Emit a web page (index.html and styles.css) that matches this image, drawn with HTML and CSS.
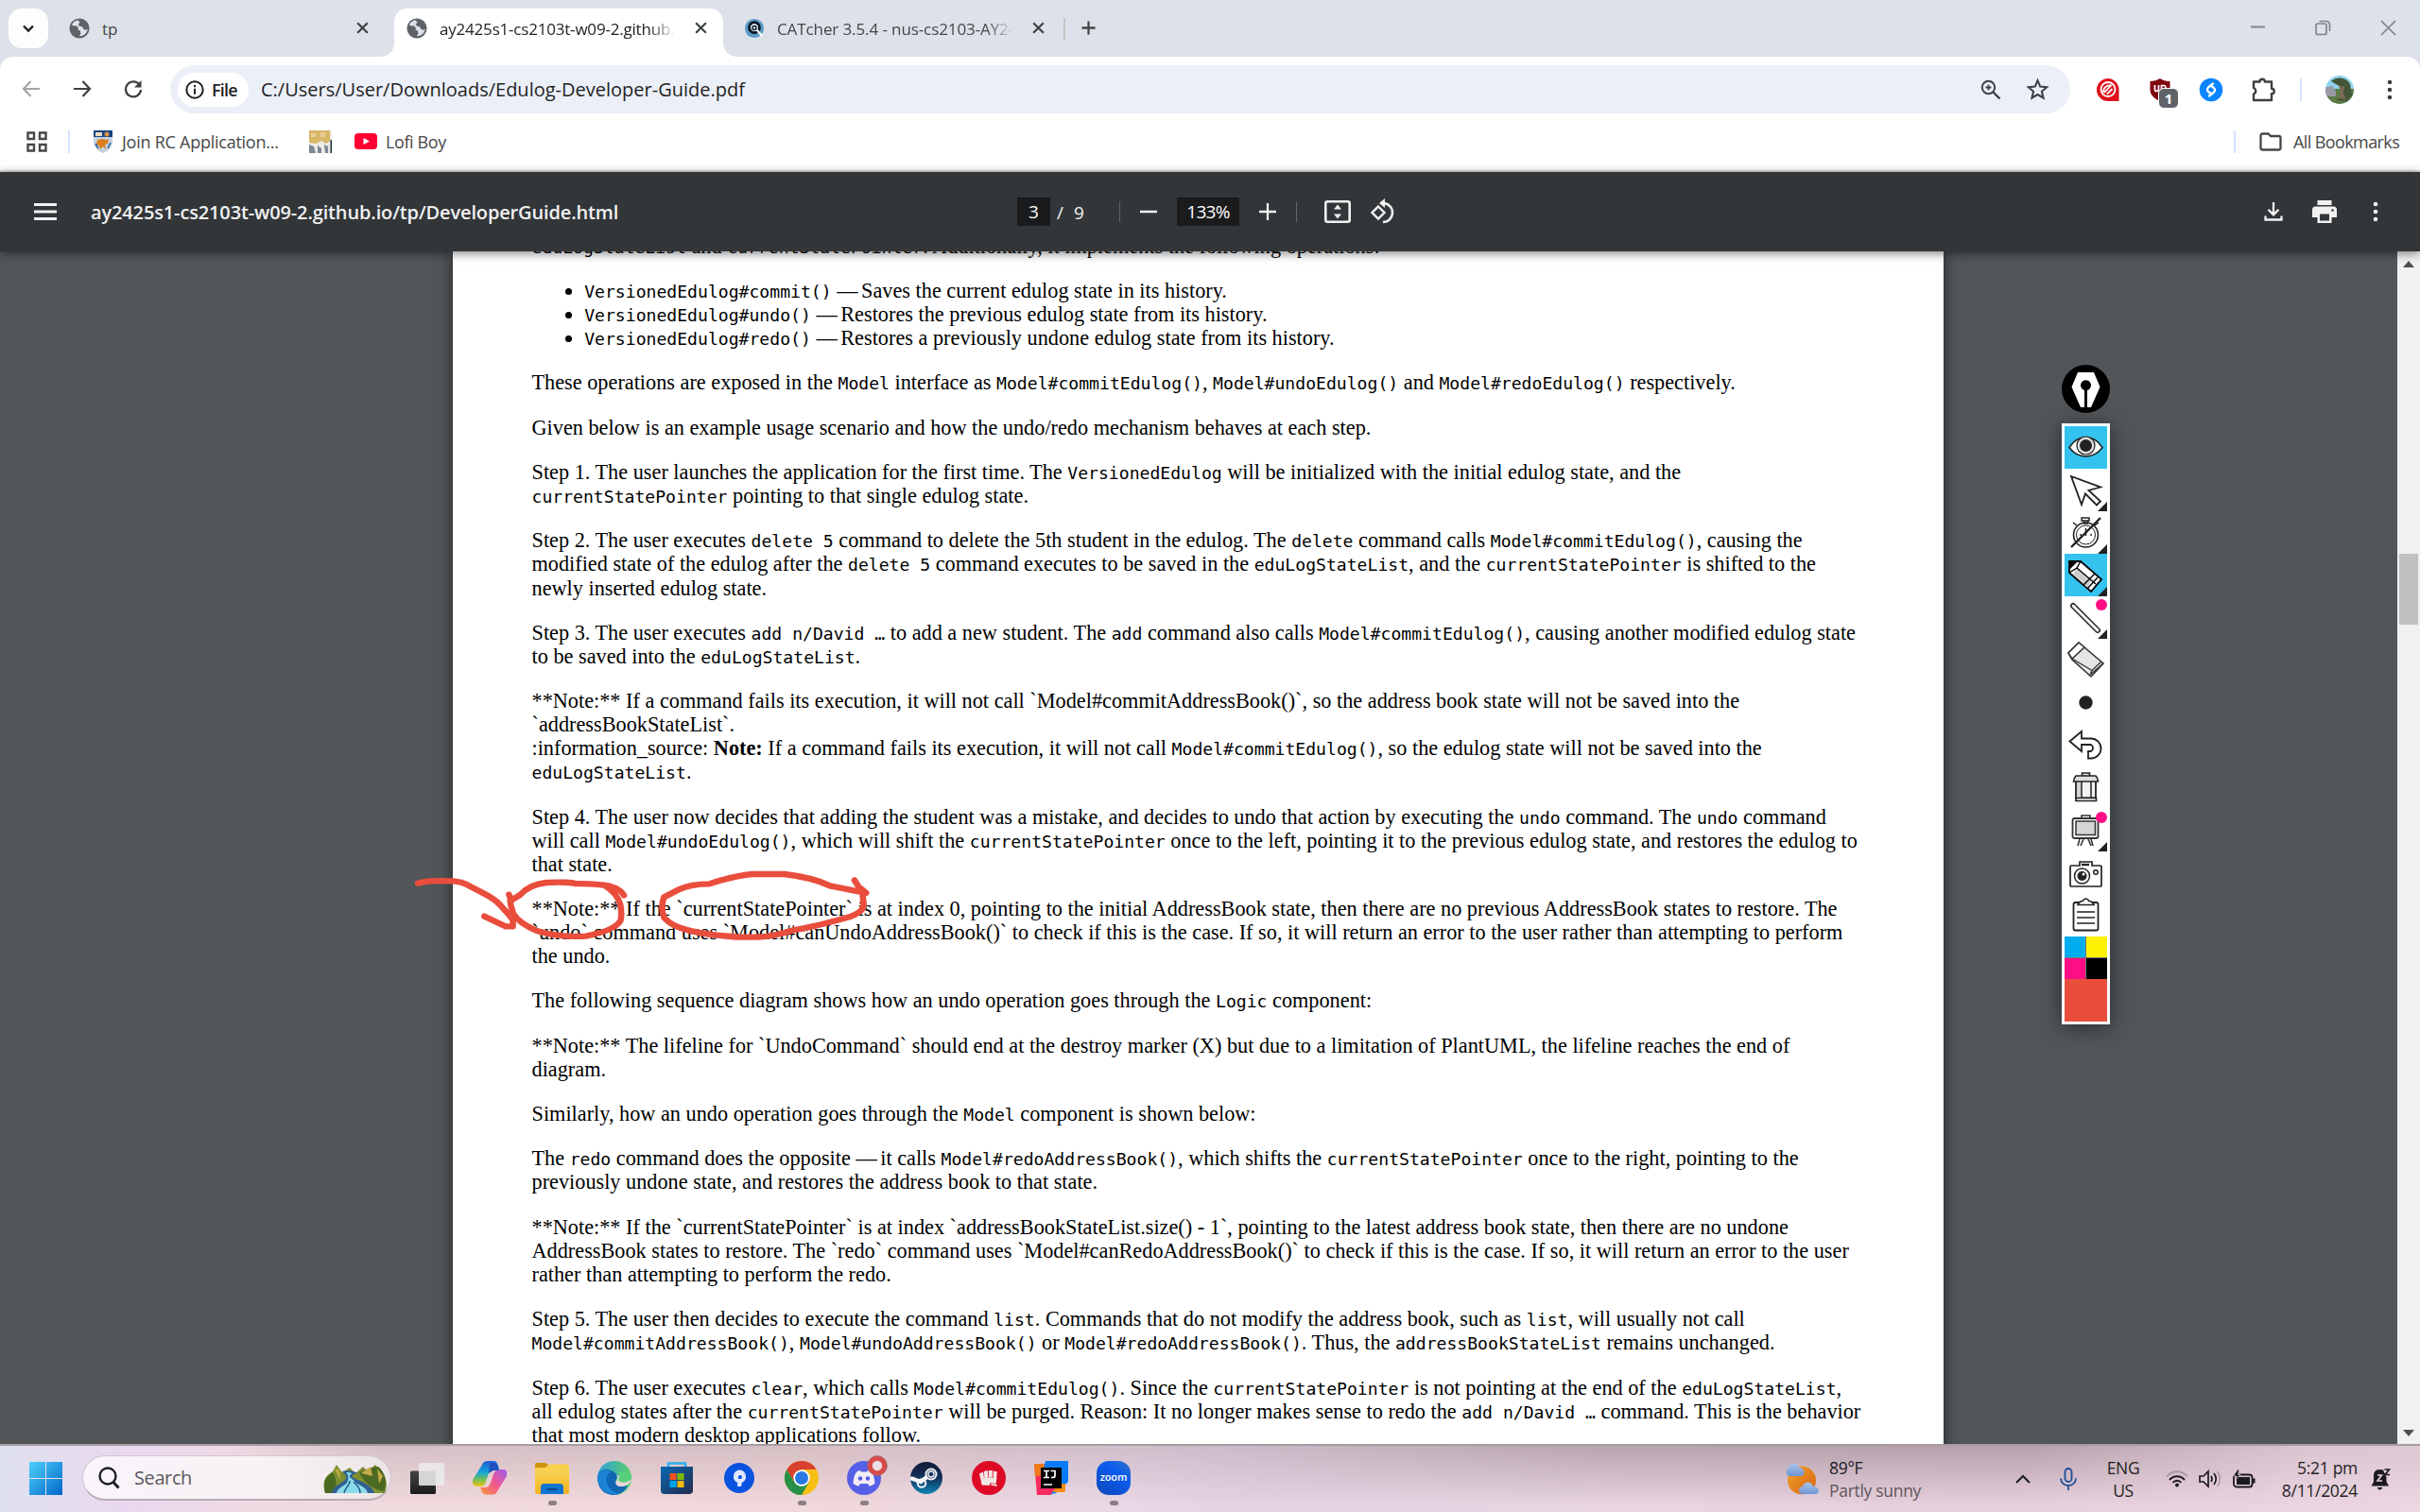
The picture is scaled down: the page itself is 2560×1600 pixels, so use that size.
FILE: index.html
```html
<!DOCTYPE html>
<html lang="en">
<head>
<meta charset="utf-8">
<title>ay2425s1-cs2103t-w09-2.github.io/tp/DeveloperGuide.html</title>
<link rel="stylesheet" href="styles.css">
</head>
<body>
<svg class="defs" width="0" height="0">
  <defs>
    <symbol id="globe" viewBox="0 0 24 24"><circle cx="12" cy="12" r="11.5" fill="#5f6368"/><path d="M10 2.500c-3 .6-5.600 2.600-6.800 5.400l1.600 1 4.200.4 1.700 2.200-.2 2.300 2.400.9.700 3-1.600 3.200c5 .4 9.200-3.400 9.400-8.300l-2.200 1.600-2.700-1.700-1.300-2.500-3-.4-1.600-2 1.900-2.600z" fill="#dde1e9"/></symbol>
    <symbol id="x" viewBox="0 0 14 14"><path d="M2 2l10 10M12 2L2 12" stroke="currentColor" stroke-width="2" fill="none"/></symbol>
    <symbol id="dots" viewBox="0 0 24 24"><circle cx="12" cy="4" r="2.300" fill="currentColor"/><circle cx="12" cy="12" r="2.300" fill="currentColor"/><circle cx="12" cy="20" r="2.300" fill="currentColor"/></symbol>
    <linearGradient id="gWin" x1="0" y1="0" x2="1" y2="1"><stop offset="0" stop-color="#4fd0fc"/><stop offset="1" stop-color="#0067c8"/></linearGradient>
    <linearGradient id="gFold" x1="0" y1="0" x2="0" y2="1"><stop offset="0" stop-color="#fad75c"/><stop offset="1" stop-color="#f3b21f"/></linearGradient>
    <linearGradient id="gEdge" x1="0" y1="0" x2="1" y2="0"><stop offset="0" stop-color="#2a9fdc"/><stop offset="1" stop-color="#5fd06a"/></linearGradient>
    <linearGradient id="gStore" x1="0" y1="0" x2="1" y2="1"><stop offset="0" stop-color="#0a68b4"/><stop offset="1" stop-color="#232a4c"/></linearGradient>
    <linearGradient id="gSteam" x1="0" y1="0" x2="0" y2="1"><stop offset="0" stop-color="#101a35"/><stop offset=".5" stop-color="#12335e"/><stop offset="1" stop-color="#0d86b4"/></linearGradient>
    <linearGradient id="gCop1" x1="0" y1="0" x2="0" y2="1"><stop offset="0" stop-color="#1d5fd8"/><stop offset=".45" stop-color="#18a5d8"/><stop offset=".75" stop-color="#7cc04a"/><stop offset="1" stop-color="#f4c020"/></linearGradient>
    <linearGradient id="gCop2" x1="1" y1="0" x2="0" y2="1"><stop offset="0" stop-color="#a05af0"/><stop offset=".5" stop-color="#f0588e"/><stop offset="1" stop-color="#f8943c"/></linearGradient>
    <linearGradient id="gSun" x1="0" y1="0" x2="1" y2="1"><stop offset="0" stop-color="#f0a82c"/><stop offset="1" stop-color="#d85c10"/></linearGradient>
    <linearGradient id="gCloud" x1="0" y1="0" x2="0" y2="1"><stop offset="0" stop-color="#a9c4ea"/><stop offset="1" stop-color="#6d96d4"/></linearGradient>
  </defs>
</svg>

<header class="tabstrip">
  <div class="tablist"><svg width="14" height="14" viewBox="0 0 14 14"><path d="M2 4.500l5 5 5-5" fill="none" stroke="#1f1f1f" stroke-width="2.400"/></svg></div>
  <div class="tab tab-a"><svg class="fav"><use href="#globe"/></svg><span class="label">tp</span><svg class="close"><use href="#x"/></svg></div>
  <div class="tab tab-b active"><svg class="fav"><use href="#globe"/></svg><span class="label">ay2425s1-cs2103t-w09-2.github.io</span><svg class="close"><use href="#x"/></svg></div>
  <div class="tab tab-c"><svg class="fav" viewBox="0 0 24 24"><circle cx="12" cy="12" r="11" fill="#5b9bc4"/><circle cx="12" cy="11" r="6" fill="#dceaf4" stroke="#0b1524" stroke-width="3"/><circle cx="12" cy="11.500" r="2.200" fill="none" stroke="#0b1524" stroke-width="1.500"/><path d="M15 14l6 7" stroke="#fff" stroke-width="2.500"/></svg><span class="label">CATcher 3.5.4 - nus-cs2103-AY2425S1</span><svg class="close"><use href="#x"/></svg></div>
  <i class="tabsep"></i>
  <svg class="plus" viewBox="0 0 18 18"><path d="M9 1.500v15M1.500 9h15" stroke="#444746" stroke-width="2.400"/></svg>
  <div class="winbtns">
    <svg width="16" height="16" viewBox="0 0 16 16"><path d="M0 7.500h15" stroke="#808387" stroke-width="2"/></svg>
    <svg width="17" height="17" viewBox="0 0 17 17" fill="none" stroke="#808387" stroke-width="1.700"><rect x="1" y="4" width="11" height="11.500" rx="2"/><path d="M4.500 1.500h7.500a3.500 3.500 0 0 1 3.500 3.500v7"/></svg>
    <svg width="17" height="17" viewBox="0 0 17 17"><path d="M1 1l15 15M16 1L1 16" stroke="#808387" stroke-width="1.700"/></svg>
  </div>
</header>

<section class="toolbar">
  <div class="navrow">
    <svg class="nav back" viewBox="0 0 20 20"><path d="M19 10H2M9.500 2L2 10l7.500 8" fill="none" stroke="#a3a5a8" stroke-width="2.200"/></svg>
    <svg class="nav" viewBox="0 0 20 20"><path d="M1 10h17M10.500 2L18 10l-7.500 8" fill="none" stroke="#3c4043" stroke-width="2.200"/></svg>
    <svg class="nav" viewBox="0 0 20 20"><path d="M17 6.500A8 8 0 1 0 18 11" fill="none" stroke="#3c4043" stroke-width="2.300"/><path d="M18.500 1v7.500h-7.500z" fill="#3c4043"/></svg>
    <div class="omnibox">
      <div class="chip"><svg width="20" height="20" viewBox="0 0 20 20"><circle cx="10" cy="10" r="8.700" fill="none" stroke="#1f1f1f" stroke-width="2"/><path d="M10 8.700v6M10 5v2.200" stroke="#1f1f1f" stroke-width="2"/></svg><span>File</span></div>
      <span class="url">C:/Users/User/Downloads/Edulog-Developer-Guide.pdf</span>
      <svg class="mag" viewBox="0 0 22 22" fill="none" stroke="#3c4043"><circle cx="8.500" cy="8.500" r="6.700" stroke-width="2"/><path d="M13.500 13.500l7 7" stroke-width="2.400"/><path d="M8.500 5.500v6M5.500 8.500h6" stroke-width="1.800"/></svg>
      <svg class="star" viewBox="0 0 24 24"><path d="M12 3l2.600 6.200 6.700.6-5.100 4.400 1.600 6.600-5.800-3.500-5.800 3.500 1.600-6.600-5.100-4.400 6.700-.6z" fill="none" stroke="#3c4043" stroke-width="2"/></svg>
    </div>
    <div class="exts">
      <svg width="26" height="26" viewBox="0 0 26 26"><path d="M13 1a12 12 0 1 0 0 24h11.500V13A12 12 0 0 0 13 1z" fill="#e0101c"/><circle cx="13" cy="12.500" r="7.500" fill="none" stroke="#fff" stroke-width="1.800"/><path d="M8.500 16c-1.500-4 3-8.500 7.500-7.500l-7 7.500M12 17.500l5.500-5.500" fill="none" stroke="#fff" stroke-width="1.800"/></svg>
      <div class="ublock"><svg width="24" height="26" viewBox="0 0 24 26"><path d="M12 1c3 2.200 7 2.800 10.500 3v9c0 6-5 9.500-10.500 12C6.500 22.500 1.500 19 1.500 13V4C5 3.800 9 3.200 12 1z" fill="#800610"/><path d="M6.500 8v4.500a2 2 0 0 0 4 0V8M13.500 17V8.500h2a2.500 2.500 0 0 1 0 5h-2" fill="none" stroke="#fff" stroke-width="1.700"/></svg><b>1</b></div>
      <svg width="26" height="26" viewBox="0 0 26 26"><circle cx="13" cy="13" r="12.300" fill="#0a84ff"/><path d="M15 6.500l-5 4a3 3 0 0 0 0 4.500l2.500 1.700M11 19.500l5-4a3 3 0 0 0 0-4.500l-2.500-1.700" fill="none" stroke="#fff" stroke-width="2.300" stroke-linecap="round"/></svg>
      <svg width="28" height="28" viewBox="0 0 28 28"><path d="M4 5.500h6.500a2.700 2.700 0 0 1 5.400 0H23v7.200a2.700 2.700 0 0 1 0 5.400V25H4v-6.500a3.500 3.500 0 0 0 0-6.500z" fill="none" stroke="#3c4043" stroke-width="2.400" stroke-linejoin="round"/></svg>
      <i class="vsep"></i>
      <svg width="30" height="30" viewBox="0 0 30 30"><clipPath id="av"><circle cx="15" cy="15" r="15"/></clipPath><g clip-path="url(#av)"><rect width="30" height="30" fill="#8fd3ee"/><path d="M0 14h30v16H0z" fill="#5d7a45"/><path d="M0 12l8-1 3 6v5H0z" fill="#9a9aa4"/><path d="M6 6c6-6 17-4 20 3l2 12-6 6-10-1 5-5-1-9z" fill="#455537"/><path d="M14 12c3 3 2 8 0 12l8 1-3-6 1-8z" fill="#7a6a55"/></g></svg>
      <svg class="kebab" width="24" height="24"><use href="#dots"/></svg>
    </div>
  </div>
  <div class="bookmarks">
    <svg class="apps" viewBox="0 0 22 22" fill="none" stroke="#474747" stroke-width="2.400"><path d="M1.500 1.500h6.500v6.500H1.500zM14 1.500h6.500v6.500H14zM1.500 14h6.500v6.500H1.500zM14 14h6.500v6.500H14z"/></svg>
    <i class="vsep"></i>
    <svg class="crest" viewBox="0 0 20 24"><path d="M0 0h20v12c0 6-5 10-10 12C5 22 0 18 0 12z" fill="#c6d2e2"/><path d="M0 0h20v7H0z" fill="#16437e"/><path d="M2 2h7v4H2z" fill="#e9dcc0"/><circle cx="14" cy="4" r="2.500" fill="#d8924a"/><path d="M4 10l5-1 5 1 2-1-1 5-3 1 1 5-3-3-3 3-1-4-3-1z" fill="#dc7c1c"/><path d="M2 14l3 5M18 13l-3 6" stroke="#2c5c96" stroke-width="1.500"/></svg>
    <span class="bm-join">Join RC Application...</span>
    <svg class="bm-pic" viewBox="0 0 24 24"><path d="M0 0h24v24H0z" fill="#ece9e4"/><path d="M0 0h22v11l-4 3-5-3-6 3-7-1z" fill="#d9b568"/><path d="M2 3h5v4H2zM12 2h5v5h-5z" fill="#e9cf96"/><path d="M0 15l5 2 2 7H0zM9 16l4 3v5H9zM16 15l4 2v7h-3z" fill="#7d8794"/><path d="M22.500 10H24v14h-1.500z" fill="#1d3034"/></svg>
    <svg class="bm-yt" viewBox="0 0 24 18"><rect width="24" height="17" rx="4" fill="#ff0033"/><path d="M9.500 5l6.500 3.500-6.500 3.500z" fill="#fff"/></svg>
    <span class="bm-lofi">Lofi Boy</span>
    <i class="vsep right"></i>
    <svg class="folder" viewBox="0 0 24 20"><path d="M1.500 3.500v13a2 2 0 0 0 2 2h17a2 2 0 0 0 2-2V6a2 2 0 0 0-2-2H12L9.500 1.500H3.500a2 2 0 0 0-2 2z" fill="none" stroke="#474747" stroke-width="2.300"/></svg>
    <span class="bm-all">All Bookmarks</span>
  </div>
</section>

<section class="pdfbar">
  <svg class="burger" viewBox="0 0 24 18"><path d="M0 1.500h24M0 9h24M0 16.500h24" stroke="#f1f1f1" stroke-width="3"/></svg>
  <h1>ay2425s1-cs2103t-w09-2.github.io/tp/DeveloperGuide.html</h1>
  <div class="pager"><span class="box pg">3</span><span class="of">/</span><span class="of">9</span></div>
  <i class="psep s1"></i>
  <svg class="zm minus" viewBox="0 0 18 18"><path d="M0 9h18" stroke="#f1f1f1" stroke-width="2.500"/></svg>
  <span class="box pct">133%</span>
  <svg class="zm zplus" viewBox="0 0 18 18"><path d="M0 9h18M9 0v18" stroke="#f1f1f1" stroke-width="2.300"/></svg>
  <i class="psep s2"></i>
  <svg class="fit" viewBox="0 0 28 24"><rect x="1.300" y="1.300" width="25.400" height="21.400" rx="2" fill="none" stroke="#f1f1f1" stroke-width="2.600"/><path d="M14 4.500l4 5h-8zM14 19.500l4-5h-8z" fill="#f1f1f1"/></svg>
  <svg class="rot" viewBox="0 0 27 28"><path d="M8 8.500l6.500 6.500L8 21.500 1.500 15z" fill="none" stroke="#f1f1f1" stroke-width="2.400"/><path d="M13 5a10 10 0 1 1 0 20" fill="none" stroke="#f1f1f1" stroke-width="2.500"/><path d="M15 0v10l-6-5z" fill="#f1f1f1"/></svg>
  <svg class="dl" viewBox="0 0 20 22"><path d="M10 1v13M4.500 8.800L10 14.300l5.500-5.500M1.500 15.500v4h17v-4" fill="none" stroke="#f1f1f1" stroke-width="2.300"/></svg>
  <svg class="prn" viewBox="0 0 26 24"><path d="M5.500 0h15v5h-15zM3.500 6.500h19A3.500 3.500 0 0 1 26 10v8h-5.500v6h-15v-6H0v-8a3.500 3.500 0 0 1 3.500-3.500z" fill="#f1f1f1"/><path d="M8 14.500h10v7H8z" fill="#323639"/><circle cx="21.500" cy="10.500" r="1.300" fill="#323639"/></svg>
  <svg class="pkebab"><use href="#dots"/></svg>
</section>

<main class="viewer">
  <article class="page">
    <p class="line-clipped"><code>eduLogStateList</code> and <code>currentStatePointer</code>. Additionally, it implements the following operations:</p>
    <ul>
      <li><code>VersionedEdulog#commit()</code> <span class="dash">—</span> Saves the current edulog state in its history.</li>
      <li><code>VersionedEdulog#undo()</code> <span class="dash">—</span> Restores the previous edulog state from its history.</li>
      <li><code>VersionedEdulog#redo()</code> <span class="dash">—</span> Restores a previously undone edulog state from its history.</li>
    </ul>
    <p>These operations are exposed in the <code>Model</code> interface as <code>Model#commitEdulog()</code>, <code>Model#undoEdulog()</code> and <code>Model#redoEdulog()</code> respectively.</p>
    <p>Given below is an example usage scenario and how the undo/redo mechanism behaves at each step.</p>
    <p>Step 1. The user launches the application for the first time. The <code>VersionedEdulog</code> will be initialized with the initial edulog state, and the<br><code>currentStatePointer</code> pointing to that single edulog state.</p>
    <p>Step 2. The user executes <code>delete 5</code> command to delete the 5th student in the edulog. The <code>delete</code> command calls <code>Model#commitEdulog()</code>, causing the<br>modified state of the edulog after the <code>delete 5</code> command executes to be saved in the <code>eduLogStateList</code>, and the <code>currentStatePointer</code> is shifted to the<br>newly inserted edulog state.</p>
    <p>Step 3. The user executes <code>add n/David …</code> to add a new student. The <code>add</code> command also calls <code>Model#commitEdulog()</code>, causing another modified edulog state<br>to be saved into the <code>eduLogStateList</code>.</p>
    <p>**Note:** If a command fails its execution, it will not call `Model#commitAddressBook()`, so the address book state will not be saved into the<br>`addressBookStateList`.<br>:information_source: <b>Note:</b> If a command fails its execution, it will not call <code>Model#commitEdulog()</code>, so the edulog state will not be saved into the<br><code>eduLogStateList</code>.</p>
    <p>Step 4. The user now decides that adding the student was a mistake, and decides to undo that action by executing the <code>undo</code> command. The <code>undo</code> command<br>will call <code>Model#undoEdulog()</code>, which will shift the <code>currentStatePointer</code> once to the left, pointing it to the previous edulog state, and restores the edulog to<br>that state.</p>
    <p>**Note:** If the `currentStatePointer` is at index 0, pointing to the initial AddressBook state, then there are no previous AddressBook states to restore. The<br>`undo` command uses `Model#canUndoAddressBook()` to check if this is the case. If so, it will return an error to the user rather than attempting to perform<br>the undo.</p>
    <p>The following sequence diagram shows how an undo operation goes through the <code>Logic</code> component:</p>
    <p>**Note:** The lifeline for `UndoCommand` should end at the destroy marker (X) but due to a limitation of PlantUML, the lifeline reaches the end of<br>diagram.</p>
    <p>Similarly, how an undo operation goes through the <code>Model</code> component is shown below:</p>
    <p>The <code>redo</code> command does the opposite <span class="dash">—</span> it calls <code>Model#redoAddressBook()</code>, which shifts the <code>currentStatePointer</code> once to the right, pointing to the<br>previously undone state, and restores the address book to that state.</p>
    <p>**Note:** If the `currentStatePointer` is at index `addressBookStateList.size() - 1`, pointing to the latest address book state, then there are no undone<br>AddressBook states to restore. The `redo` command uses `Model#canRedoAddressBook()` to check if this is the case. If so, it will return an error to the user<br>rather than attempting to perform the redo.</p>
    <p>Step 5. The user then decides to execute the command <code>list</code>. Commands that do not modify the address book, such as <code>list</code>, will usually not call<br><code>Model#commitAddressBook()</code>, <code>Model#undoAddressBook()</code> or <code>Model#redoAddressBook()</code>. Thus, the <code>addressBookStateList</code> remains unchanged.</p>
    <p>Step 6. The user executes <code>clear</code>, which calls <code>Model#commitEdulog()</code>. Since the <code>currentStatePointer</code> is not pointing at the end of the <code>eduLogStateList</code>,<br>all edulog states after the <code>currentStatePointer</code> will be purged. Reason: It no longer makes sense to redo the <code>add n/David …</code> command. This is the behavior<br>that most modern desktop applications follow.</p>
  </article>
  <div class="scrollbar"><svg class="arr" viewBox="0 0 12 7"><path d="M6 0l6 7H0z" fill="#505050"/></svg><i class="thumb"></i><svg class="arr" viewBox="0 0 12 7"><path d="M6 7L0 0h12z" fill="#505050"/></svg></div>
</main>

<svg class="ink" viewBox="0 0 1568 450" preserveAspectRatio="none">
  <g fill="none" stroke="#e94e3d" stroke-width="19" stroke-linecap="round" stroke-linejoin="round">
    <path d="M64 104C90 96 110 96 172 97C190 99 202 101 214 108C235 120 250 127 262 134C285 146 305 160 315 171C330 188 340 198 356 220L356 241H334L268 209"/>
    <path d="M344 140C346 148 350 152 356 155L378 141C400 115 430 105 458 102C500 99 540 102 548 105C590 106 620 106 650 112C670 118 690 127 697 142M636 110C665 128 680 148 686 172C690 195 690 212 686 224C670 250 620 264 580 272C520 275 470 268 430 255C400 242 370 222 358 202C350 180 346 165 348 150"/>
    <path d="M1405 94L1418 115L1441 135C1420 130 1400 126 1330 112C1290 92 1230 80 1190 75H1090C1050 79 1000 92 960 106C920 106 890 112 865 124L820 148C812 170 814 195 820 212C840 240 880 252 925 260C970 270 1020 272 1050 275H1110C1160 272 1190 262 1220 252C1280 242 1330 228 1395 209C1425 195 1436 185 1433 165L1428 125"/>
  </g>
</svg>

<aside class="pen">
  <svg class="pen-badge" viewBox="0 0 51 51"><circle cx="25.500" cy="25.500" r="25.500" fill="#000"/><path d="M17 8h17l6.500 15.500L31 45h-4V27a5.500 5.500 0 1 0-3 0v18h-4L10.500 23.500z" fill="#fff"/></svg>
  <div class="pen-panel">
    <svg class="on" viewBox="0 0 45 45"><path d="M5 22.500C14 8 31 8 40 22.500C31 35 14 35 5 22.500z" fill="#fff" stroke="#222" stroke-width="1.500"/><circle cx="22.500" cy="20.500" r="9.500" fill="#ddd" stroke="#222" stroke-width="1.200"/><circle cx="22.500" cy="20.500" r="6.500" fill="#222"/></svg>
    <svg viewBox="0 0 45 45"><path d="M7 8l31 11.500-12.500 3.500L38 34.500l-4 4-12-12L18 38z" fill="#fff" stroke="#222" stroke-width="1.800"/><path d="M45 35v10H35z" fill="#222"/></svg>
    <svg viewBox="0 0 45 45"><circle cx="22.500" cy="25" r="13" fill="#fff" stroke="#222" stroke-width="1.600"/><circle cx="22.500" cy="25" r="10" fill="none" stroke="#222"/><path d="M18 7h8v3h-8zM20.500 10v3h4v-3M9 12l4 3M36 12l-4 3M22.500 18v8M16 25h2M27 25h2" fill="none" stroke="#222" stroke-width="1.500"/><path d="M7 38L38 7" stroke="#222" stroke-width="2.400"/><path d="M45 35v10H35z" fill="#222"/></svg>
    <svg class="on" viewBox="0 0 45 45"><path d="M5 8h12l22 19-11 13L5 20z" fill="#fff" stroke="#000" stroke-width="1.800"/><path d="M5 8h9L5 17z" fill="#000"/><path d="M9 21l4-6 15 14-4 7z" fill="#ccc"/><path d="M17 8l-4 7-8 5M13 15l20 17M20 33l12-12M24 37l11-12" fill="none" stroke="#000" stroke-width="1.400"/><path d="M45 35v10H35z" fill="#222"/></svg>
    <svg viewBox="0 0 45 45"><path d="M9 10l26 26" stroke="#222" stroke-width="6" stroke-linecap="round"/><path d="M9 10l26 26" stroke="#fff" stroke-width="3" stroke-linecap="round"/><circle cx="39" cy="9" r="6" fill="#ff0d86"/><path d="M45 35v10H35z" fill="#222"/></svg>
    <svg viewBox="0 0 45 45"><path d="M4 15L15 4l26 22-13 14L8 22z" fill="#e6e6e6" stroke="#333" stroke-width="1.600"/><path d="M4 15L15 4l6 5L8 21z" fill="#fff" stroke="#333" stroke-width="1.500"/><path d="M8 21l21 12.500L39 24M27 38l14-12M29 33.500l-2 4.500" fill="none" stroke="#333" stroke-width="1.300"/></svg>
    <svg viewBox="0 0 45 45"><circle cx="22.500" cy="22.500" r="7.200" fill="#222"/></svg>
    <svg viewBox="0 0 45 45"><path d="M5.500 18.500L18 8v7.500h10a10.500 10.500 0 0 1 0 21h-3V29h3a4 4 0 0 0 0-7H18v7z" fill="#fff" stroke="#222" stroke-width="1.800"/></svg>
    <svg viewBox="0 0 45 45"><path d="M12 15h21v18.500H12z" fill="#f2f2f2" stroke="#222" stroke-width="1.800"/><path d="M13 16h5v17h-5z" fill="#d4d4d4"/><path d="M18 15v18M28 15v18" stroke="#222" stroke-width="1.500"/><path d="M12 33.500h21.500v3H12z" fill="#fff" stroke="#222" stroke-width="1.600"/><path d="M12 10h21q2 2 2.500 6h-26q.5-4 2.500-6zM18.500 7h8v3h-8z" fill="#ddd" stroke="#222" stroke-width="1.700"/></svg>
    <svg viewBox="0 0 45 45"><path d="M18 7h9v4h-9zM16 32l-2 7M20 32l-3 7M28 32l2 7M25 32l3 7" fill="#fff" stroke="#333" stroke-width="1.600"/><rect x="8.500" y="10" width="27" height="21" rx="2" fill="#fff" stroke="#333" stroke-width="1.800"/><path d="M12 13h20.500v14.500H12z" fill="#d5d5d5" stroke="#333" stroke-width="1.500"/><circle cx="39" cy="9" r="6" fill="#ff0d86"/><path d="M45 35v10H35z" fill="#222"/></svg>
    <svg viewBox="0 0 45 45"><path d="M7 15h9v-4h13v4h9q1 0 1 1v20q0 1-1 1H7q-1 0-1-1V16q0-1 1-1z" fill="#fff" stroke="#222" stroke-width="1.700"/><path d="M18 14h8" stroke="#222" stroke-width="2.400"/><circle cx="18.500" cy="26" r="8" fill="#fff" stroke="#222" stroke-width="1.500"/><circle cx="18.500" cy="26" r="5" fill="#222"/><circle cx="20" cy="24" r="1.500" fill="#fff"/><circle cx="33" cy="22" r="2.300" fill="none" stroke="#222" stroke-width="1.500"/></svg>
    <svg viewBox="0 0 45 45"><rect x="9.500" y="9" width="26" height="29.500" rx="2" fill="#fff" stroke="#222" stroke-width="1.800"/><path d="M14 11.500q2-4 5-4 3.500-5 7 0 3 0 5 4z" fill="#fff" stroke="#222" stroke-width="1.700"/><path d="M13 19h19M13 25h19M13 31h19" stroke="#222" stroke-width="1.500"/></svg>
    <div class="swatches"><i class="c1"></i><i class="c2"></i><i class="c3"></i><i class="c4"></i></div>
    <div class="current"></div>
  </div>
</aside>

<footer class="taskbar">
  <svg class="win" viewBox="0 0 35 35"><path d="M0 0h17v17H0zM18 0h17v17H18zM0 18h17v17H0zM18 18h17v17H18z" fill="url(#gWin)"/></svg>
  <div class="search">
    <svg width="23" height="24" viewBox="0 0 23 24"><circle cx="10" cy="10" r="8.500" fill="none" stroke="#1d1d22" stroke-width="2.400"/><path d="M15.500 16l6 6.500" stroke="#1d1d22" stroke-width="3"/></svg>
    <span>Search</span>
    <svg class="scene" viewBox="0 0 67 32"><path d="M2 32C-3 16 6 12 10 9l4-7 6 8 8-5 6 6 8-7 5 5 8-7 10 12c3 8 2 12 0 18z" fill="#7f8f30"/><path d="M2 32c-3-14 2-18 8-22 5 8 4 16 2 22zM38 10c8-3 14-6 20-6 8 6 10 18 6 26-12-2-22-10-26-20z" fill="#4a6a22"/><path d="M40 11l10-7 2 10zM12 6l5 2 1 10zM57 6l6 8-4 8z" fill="#c5ab48"/><path d="M20 9c6-2 14 0 16 2-6 1-8 3-2 6 10 4 18 8 20 15H9c2-8 10-10 14-14 3-3 0-6-3-9z" fill="#2f5f93"/><path d="M24 10c6 0 8 1 4 3-2 3 6 5 6 8 6 3 12 6 13 11H14c1-6 8-7 11-11 2-4 2-8-1-11z" fill="#8adcea"/><path d="M28 19c0 6-6 8-6 13M32 20c4 4 7 7 7 12" fill="none" stroke="#275487" stroke-width="1.500"/></svg>
  </div>
  <div class="apps-row">
    <div class="app"><svg viewBox="0 0 36 36"><defs><linearGradient id="tv" x2="0" y2="1"><stop stop-color="#444"/><stop offset="1" stop-color="#1c1c1c"/></linearGradient></defs><rect x="0" y="10.500" width="27" height="24.500" rx="1.500" fill="url(#tv)"/><rect x="9" y="2" width="27" height="24" rx="1.500" fill="#eceaec" opacity=".88"/></svg></div>
    <div class="app"><svg viewBox="0 0 36 36"><path d="M10 4c1-3 3-4 6-4h6c3 0 4 2 5 5l1 3h-6c-3 0-4 2-5 5l-3 9c-1 3-2 5-6 5H5c-4 0-6-3-5-7z" fill="url(#gCop1)"/><path d="M26 32c-1 3-3 3.500-6 3.500h-6c-3 0-4-2-5-5l-1-2.500h5c3 0 5-2 6-5l3-9c1-3 3-5 6-5h4c4 0 5 3 4 7z" fill="url(#gCop2)"/><path d="M18 2h5c2 0 3 2 4 5l1 3h-6l-5 3z" fill="#1f52c0"/></svg></div>
    <div class="app running"><svg viewBox="0 0 36 36"><path d="M0 4q0-2 2-2h9l4 5H0z" fill="#d79a14"/><rect x="0" y="5.500" width="36" height="29.500" rx="2" fill="url(#gFold)"/><path d="M0 6h12l3-2.500h19q2 0 2 2V9H0z" fill="#f8cf4c"/><path d="M0 4q0-2 2-2h9l3 2-3 3H0z" fill="#cf9410"/><path d="M6 35V28q0-4 4-4h16q4 0 4 4v7z" fill="#1274cf"/><path d="M13 29h10v2H13z" fill="#0b4688"/></svg></div>
    <div class="app"><svg viewBox="0 0 36 36"><circle cx="18" cy="18" r="18" fill="url(#gEdge)"/><path d="M0 17C2 9 9 8 14 10c6 2 8 6 6 9-3 6 2 10 12 7-6 13-24 13-30 1-1-3-2-7-2-10z" fill="#1165b3"/><path d="M12 13c-6 8 0 19 11 22C12 38 1 30 0 18c1-8 10-10 15-6z" fill="#1c84d6"/><path d="M20 15c3 2 1 5-1 8 1 5 8 5 13 2l3-3c3-4-9-6-9-6z" fill="#ead5da"/><path d="M22 13c3 6-2 7 2 9 6 2 12-1 12-6 0-3-6-9-14-3z" fill="#58cf7c"/></svg></div>
    <div class="app"><svg viewBox="0 0 36 36"><path d="M9 8V2.500h18V8" fill="none" stroke="#2bb0ee" stroke-width="2.500"/><path d="M1 6h34v25q0 4-4 4H5q-4 0-4-4z" fill="url(#gStore)"/><path d="M10.500 13h7v7h-7z" fill="#f25022"/><path d="M18.500 13h7v7h-7z" fill="#7fba00"/><path d="M10.500 21h7v7h-7z" fill="#00a4ef"/><path d="M18.500 21h7v7h-7z" fill="#ffb900"/></svg></div>
    <div class="app"><svg viewBox="0 0 36 36"><circle cx="18" cy="18" r="16" fill="#0a52e0"/><path d="M18 9.500a7 7 0 0 1 2.800 13.400L20 27h-4l.5-8h3A2 2 0 1 0 17 17l-.5 6A7 7 0 0 1 18 9.500z" fill="#dfe8fb"/></svg></div>
    <div class="app running"><svg viewBox="0 0 36 36"><circle cx="18" cy="18" r="18" fill="#f8c015"/><path d="M2.400 9A18 18 0 0 1 33.600 9H18L10.200 22.500z" fill="#d8412f"/><path d="M2.400 9A18 18 0 0 0 18 36l7.800-13.500H10.200z" fill="#259047"/><circle cx="18" cy="18" r="8.700" fill="#fff"/><circle cx="18" cy="18" r="7" fill="#2a78e4"/></svg></div>
    <div class="app running"><svg viewBox="0 0 36 36"><circle cx="18" cy="18" r="18" fill="#5560e6"/><path d="M12 10.500l2-.5 1 1.500h6l1-1.500 2 .5c3 1 5 6 5.500 13-2 2-4 2.700-6 3L22 24h-8l-1.500 2.500c-2-.3-4-1-6-3C7 16.500 9 11.500 12 10.500z" fill="#f1ecf6"/><circle cx="14" cy="18.500" r="2.300" fill="#5560e6"/><circle cx="22" cy="18.500" r="2.300" fill="#5560e6"/></svg><svg class="rec" viewBox="0 0 22 22"><circle cx="11" cy="11" r="10.300" fill="#d94a4a" stroke="#a66" stroke-width="1"/><circle cx="11" cy="11" r="5.200" fill="#eadfe4"/></svg></div>
    <div class="app"><svg viewBox="0 0 36 36"><circle cx="18" cy="18" r="17" fill="url(#gSteam)"/><path d="M1 18l11 4 9-7" fill="none" stroke="#f4f4f6" stroke-width="4.500"/><circle cx="13" cy="23.500" r="4.300" fill="none" stroke="#f4f4f6" stroke-width="2"/><circle cx="23" cy="14" r="5.500" fill="#15365f" stroke="#f4f4f6" stroke-width="2"/><circle cx="23" cy="14" r="3" fill="none" stroke="#f4f4f6" stroke-width="1.300"/></svg></div>
    <div class="app"><svg viewBox="0 0 36 36"><circle cx="18" cy="18" r="18" fill="#dd0a26"/><path d="M8 13.500l4-2 1 6.500-3.500 2zM12.800 11l4-1 .7 7.500-4 1zM17.800 10h4l-.1 7.500-3.500.2zM22.800 10.500l4 1-.8 7-3.500-1z" fill="#f3e8e8"/><path d="M9.500 19.500l5-2 12 .5-1 6-6-.8-1 2.800-8-.5z" fill="#f3e8e8"/><path d="M20 24l6.500.8v2.200l-6-1.500z" fill="#f3e8e8"/></svg></div>
    <div class="app"><svg viewBox="0 0 36 36"><path d="M0 3l14 1 4 32H3z" fill="#fa2c5a"/><path d="M0 3l12 0 2 10L1 17z" fill="#ee7a1c"/><path d="M12 0h24v22l-13 12-9 2-6-20z" fill="#087cfa"/><path d="M22 24h11v8l-2 1H20z" fill="#fb8b12"/><path d="M3 25h22l-8 11H3z" fill="#f82a62"/><path d="M7 7h22v22H7z" fill="#000"/><path d="M10 25h9M10 10.500h6M10 17.500h6M13 10.500v7M17.500 10.500h4.500v5q0 2-2.500 2h-1.500" fill="none" stroke="#fff" stroke-width="1.700"/></svg></div>
    <div class="app running zoomapp">zoom</div>
  </div>
  <div class="tray">
    <svg class="weather" viewBox="0 0 36 34"><circle cx="18" cy="18.500" r="15" fill="url(#gSun)"/><path d="M4 14a4.500 4.500 0 0 1 0-8C5-1 14-1 15 5c7 0 7 9 2 9z" fill="url(#gCloud)"/><path d="M19 33a4 4 0 0 1 0-8c1-6 10-6 11 0 8 0 7 8 2 8z" fill="url(#gCloud)"/></svg>
    <div class="wx"><span class="t1">89°F</span><span class="t2">Partly sunny</span></div>
    <svg class="chev" viewBox="0 0 16 10"><path d="M1 9l7-7 7 7" fill="none" stroke="#1b1b1f" stroke-width="2"/></svg>
    <svg class="mic" viewBox="0 0 18 24"><rect x="5.500" y="1" width="7" height="14" rx="3.500" fill="none" stroke="#1c4e98" stroke-width="1.800"/><path d="M1 11.500a8 7.500 0 0 0 16 0M9 19v5" fill="none" stroke="#1c4e98" stroke-width="1.800"/></svg>
    <div class="lang"><span>ENG</span><span>US</span></div>
    <svg class="wifi" viewBox="0 0 24 18"><path d="M1 6.500C7-.5 17-.5 23 6.500" fill="none" stroke="#a799a3" stroke-width="1.800"/><path d="M4 10c4.500-5 11.500-5 16 0M7.500 13c2.500-3 6.500-3 9 0" fill="none" stroke="#1b1b1f" stroke-width="1.900"/><circle cx="12" cy="15.500" r="2" fill="#1b1b1f"/></svg>
    <svg class="vol" viewBox="0 0 24 20"><path d="M1 7h4l5-5v16l-5-5H1z" fill="none" stroke="#1b1b1f" stroke-width="1.700"/><path d="M13 7q2 3 0 6M16 4q4.500 6 0 12" fill="none" stroke="#1b1b1f" stroke-width="1.700"/><path d="M19.500 2q6 8 0 16" fill="none" stroke="#a799a3" stroke-width="1.500"/></svg>
    <svg class="bat" viewBox="0 0 24 20"><rect x="1" y="5.500" width="19.500" height="13" rx="3" fill="none" stroke="#1b1b1f" stroke-width="1.800"/><path d="M4 8h14v8H4zM21 9.500h2.500v5H21z" fill="#1b1b1f"/><path d="M5 0L.5 7H4L2.500 11.500 8 5.500H5.500L7 0z" fill="#1b1b1f" stroke="#dcc4d0" stroke-width=".8"/></svg>
    <div class="clock"><span>5:21 pm</span><span>8/11/2024</span></div>
    <svg class="bell" viewBox="0 0 21 23"><path d="M9.500 1C4 1 3 4.500 3 8v6L.5 18.500H19L16.500 14V9.500L13 1.500zM6.500 20h6q-3 5-6 0z" fill="#1b1b1f"/><path d="M7 7h4.500L7 13h5" fill="none" stroke="#e6cfda" stroke-width="1.600"/><path d="M14.500 1h5L15 6.500h5" fill="none" stroke="#1b1b1f" stroke-width="1.700"/></svg>
  </div>
</footer>
</body>
</html>
```

FILE: styles.css
```css
* { box-sizing: border-box; }
body {
  margin: 0;
  width: 2560px;
  height: 1600px;
  overflow: hidden;
  position: relative;
  display: flex;
  flex-direction: column;
  background: #dde1e9;
  font-family: "Open Sans", "Noto Sans", sans-serif;
  color: #1f1f1f;
}
svg { display: block; flex: none; }
span, h1, p, li { white-space: nowrap; }
.defs { position: absolute; }

/* Tab strip */
.tabstrip { height: 60px; flex: none; display: flex; align-items: flex-start; padding: 9px 0 0 9px; background: #dde1e9; }
.tablist { width: 42px; height: 42px; border-radius: 14px; background: #fdfdfe; display: grid; place-items: center; }
.tab { height: 51px; display: flex; align-items: flex-start; font-size: 17px; line-height: 24px; color: #444746; }
.tab .fav { width: 22px; height: 22px; margin-top: 10px; }
.tab .label { overflow: hidden; margin: 10px 0 0 13px; }
.tab .close { width: 15px; height: 15px; margin-top: 13px; color: #3c4043; }
.tab-a { width: 366px; padding-left: 22px; }
.tab-a .label { width: 268px; }
.tab-b { width: 348px; padding-left: 13px; background: #fff; border-radius: 14px 14px 0 0; position: relative; color: #1f1f1f; }
.tab-b::before, .tab-b::after { content: ""; position: absolute; bottom: 0; width: 14px; height: 14px; }
.tab-b::before { left: -14px; background: radial-gradient(circle at 0 0, transparent 13.500px, #fff 14px); }
.tab-b::after { right: -14px; background: radial-gradient(circle at 100% 0, transparent 13.500px, #fff 14px); }
.tab-b .label, .tab-c .label { width: 252px; -webkit-mask-image: linear-gradient(90deg, #000 88%, transparent 99%); mask-image: linear-gradient(90deg, #000 88%, transparent 99%); }
.tab-b .label { letter-spacing: -.2px; }
.tab-b .close { margin-left: 17px; }
.tab-c { width: 360px; padding-left: 22px; }
.tab-c .label { letter-spacing: -.1px; }
.tab-c .close { margin-left: 17px; }
.tabsep { width: 2px; height: 24px; margin-top: 10px; background: #c5c3c3; }
.plus { width: 17px; height: 17px; margin: 12px 0 0 16px; }
.winbtns { margin: 12px 25px 0 auto; display: flex; gap: 52px; }

/* Navigation */
.toolbar { height: 122px; flex: none; background: #fff; border-radius: 14px 14px 0 0; border-bottom: 2px solid #dcdcdc; }
.navrow { height: 68px; padding: 9px 0 0 23px; display: flex; align-items: flex-start; }
.nav { width: 20px; height: 20px; margin: 15px 34px 0 0; }
.nav + .nav { margin-right: 34px; }
.omnibox { width: 2010px; height: 51px; margin-left: -5px; border-radius: 26px; background: #ebeff8; display: flex; align-items: center; padding-left: 8px; }
.chip { width: 75px; height: 36px; border-radius: 18px; background: #fff; display: flex; align-items: center; gap: 8px; padding-left: 8px; font-size: 18px; font-weight: 600; letter-spacing: -.8px; }
.url { margin-left: 13px; font-size: 20px; letter-spacing: 0; }
.mag { width: 22px; height: 22px; margin-left: auto; }
.star { width: 25px; height: 25px; margin: 0 22px 0 26px; }
.exts { display: flex; align-items: center; height: 51px; padding-left: 27px; }
.ublock { position: relative; margin-left: 30px; }
.ublock b { position: absolute; left: 10px; top: 11px; width: 22px; height: 22px; border-radius: 6px; border: 1px solid #fff; background: #5f6368; color: #fff; font-size: 15px; line-height: 20px; text-align: center; }
.ublock + svg { margin-left: 29px; }
.ublock + svg + svg { margin-left: 28px; }
.vsep { width: 2px; height: 24px; background: #d3e3fd; flex: none; }
.exts .vsep { margin-left: 25px; }
.exts .vsep + svg { margin-left: 25px; }
.kebab { margin-left: 26px; color: #3c4043; }
.bookmarks { height: 44px; display: flex; align-items: center; padding: 0 21px 0 28px; font-size: 18px; color: #474747; }
.apps { width: 22px; height: 22px; margin-right: 22px; }
.crest { width: 20px; height: 24px; margin: 0 10px 0 25px; }
.bm-join { width: 198px; letter-spacing: -.25px; }
.bm-pic { width: 24px; height: 24px; }
.bm-yt { width: 24px; height: 18px; margin: 0 9px 0 24px; }
.bm-lofi { letter-spacing: -.4px; }
.vsep.right { margin-left: auto; margin-right: 25px; }
.folder { width: 24px; height: 20px; margin-right: 12px; }
.bm-all { width: 113px; letter-spacing: -.6px; }

/* PDF toolbar */
.pdfbar { height: 84px; flex: none; background: #323639; color: #f1f1f1; display: flex; align-items: center; padding-left: 36px; position: relative; z-index: 2; box-shadow: 0 2px 10px rgba(0,0,0,.5); }
.burger { width: 24px; height: 18px; }
.pdfbar h1 { width: 980px; margin: 2px 0 0 36px; font-size: 20px; font-weight: 600; line-height: 28px; letter-spacing: -.14px; }
.pager { display: flex; align-items: center; width: 108px; gap: 7px; font-size: 19px; }
.pager .of { margin-top: 2px; }
.pager .of + .of { margin-left: 4px; }
.box { height: 30px; background: #191b1c; font-size: 19px; line-height: 31px; text-align: center; color: #fff; }
.pg { width: 35px; }
.psep { width: 1px; height: 22px; background: #5f6366; }
.zm { width: 18px; height: 18px; }
.minus { margin: 0 21px 0 21px; }
.pct { width: 66px; letter-spacing: -.7px; }
.zplus { margin: 0 21px; }
.fit { width: 28px; height: 24px; margin-left: 29px; }
.rot { width: 27px; height: 28px; margin-left: 21px; }
.dl { width: 20px; height: 22px; margin: 0 31px 0 auto; }
.prn { width: 26px; height: 24px; margin-right: 29px; }
.pkebab { width: 24px; height: 24px; margin-right: 35px; }

/* Document */
.viewer { height: 1262px; flex: none; background: #525659; display: flex; justify-content: space-between; overflow: hidden; }
.page { width: 1577px; height: 1290px; margin-left: 479px; padding: 0 0 0 83.500px; background: #fff; box-shadow: 0 0 14px rgba(0,0,0,.6); font-family: "Liberation Serif", serif; font-size: 22.270px; line-height: 25.050px; color: #000; }
.page p, .page ul { margin: 0 0 22.270px; }
.page .line-clipped { margin-top: -18.300px; }
.page ul { padding-left: 55.700px; }
.page code { font-family: "DejaVu Sans Mono", monospace; font-size: 18.100px; line-height: 0; }
.dash { letter-spacing: -2px; }
.scrollbar { width: 24px; background: #f1f1f1; display: flex; flex-direction: column; align-items: center; padding: 10px 0 8px; }
.arr { width: 12px; height: 7px; }
.thumb { width: 20px; height: 75px; margin-top: 303px; background: #c1c1c1; }
.arr:last-child { margin-top: auto; }

/* Overlays */
.ink { position: absolute; left: 420px; top: 900px; width: 540px; height: 150px; z-index: 3; }
.pen { position: absolute; left: 2181px; top: 386px; width: 51px; z-index: 3; }
.pen-badge { width: 51px; height: 51px; }
.pen-panel { margin-top: 11px; padding: 3px; background: #fff; box-shadow: 0 3px 22px rgba(0,0,0,.5); }
.pen-panel svg { width: 45px; height: 45px; }
.pen-panel .on { background: #34c3ee; }
.swatches { display: grid; grid-template-columns: 22px 22px; grid-template-rows: 22px 22px; gap: 1px; background: #777; }
.c1 { background: #00aeef; }
.c2 { background: #fff200; }
.c3 { background: #ff0d86; }
.c4 { background: #000; }
.current { height: 45px; background: #e94e3d; }

/* Taskbar */
.taskbar {
  height: 72px; flex: none; position: relative; z-index: 4; display: flex; align-items: flex-start; padding-left: 31px;
  border-top: 2px solid #a59ca1;
  background: linear-gradient(90deg, #dfe1f0 0, #e9d8ef 130px, #f0dae2 280px, #f1dade 420px, #f0d8dc 900px, #ead8e6 1180px, #e4d3e2 1300px, #e9d5e2 1700px, #e7cfdb 2100px, #ebd6e2 2560px);
}
.taskbar::before {
  content: ""; position: absolute; inset: 0; z-index: -1;
  background: linear-gradient(180deg, rgba(110,90,100,.4), rgba(110,90,100,0) 90%);
  -webkit-mask-image: linear-gradient(90deg, transparent 240px, rgba(0,0,0,.5) 400px, rgba(0,0,0,.5) 1300px, #000 1700px, #000 2150px, rgba(0,0,0,.3) 2450px);
  mask-image: linear-gradient(90deg, transparent 240px, rgba(0,0,0,.5) 400px, rgba(0,0,0,.5) 1300px, #000 1700px, #000 2150px, rgba(0,0,0,.3) 2450px);
}
.win { width: 35px; height: 35px; margin-top: 17px; }
.search { width: 327px; height: 48px; margin: 10px 0 0 21px; border-radius: 24px; border: 1px solid #d3c6d0; border-bottom: 2px solid #b9abb5; background: linear-gradient(90deg, #f8f4fa, #f8f2f5 60%, #ece5e8); display: flex; align-items: center; padding: 0 4px 0 16px; color: #5b585d; font-size: 20px; }
.search span { margin-left: 15px; letter-spacing: -.4px; }
.scene { width: 67px; height: 32px; margin-left: auto; }
.apps-row { display: flex; gap: 30px; margin: 16px 0 0 20px; }
.app { position: relative; width: 36px; height: 36px; }
.app > svg:first-child { width: 36px; height: 36px; }
.running::after { content: ""; position: absolute; left: 14px; top: 42px; width: 9px; height: 5px; border-radius: 3px; background: #8a7f84; }
.app .rec { position: absolute; left: 21px; top: -6px; width: 22px; height: 22px; }
.zoomapp { border-radius: 13px; background: linear-gradient(215deg, #3270c0, #0b5cf0 35%, #0f48b8); color: #fff; font: 600 11px/34px "Open Sans", sans-serif; text-align: center; letter-spacing: -.2px; }
.tray { margin-left: auto; height: 70px; display: flex; align-items: center; font-size: 17.500px; line-height: 24px; padding-right: 31px; }
.tray > div { display: flex; flex-direction: column; margin-top: -1px; }
.weather { width: 36px; height: 34px; margin-right: 11px; }
.wx { width: 197px; color: #1b1b1f; }
.t1, .t2 { letter-spacing: -.3px; }
.t2 { color: #5f565c; }
.chev { width: 16px; height: 10px; margin-right: 31px; }
.mic { width: 18px; height: 24px; margin-right: 31px; }
.lang { width: 36px; text-align: center; margin-right: 27px; letter-spacing: -.4px; }
.wifi { width: 24px; height: 18px; margin-right: 11px; }
.vol { width: 24px; height: 20px; margin-right: 12px; }
.bat { width: 24px; height: 20px; }
.clock { width: 108px; text-align: right; letter-spacing: -.3px; }
.bell { width: 21px; height: 23px; margin-left: 14px; }
```
